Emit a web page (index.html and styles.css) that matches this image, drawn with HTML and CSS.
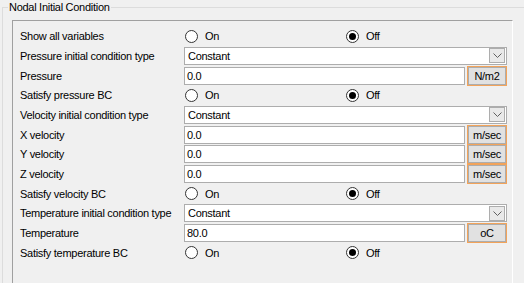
FILE: index.html
```html
<!DOCTYPE html>
<html lang="en">
<head>
    <meta charset="UTF-8">
    <meta name="viewport" content="width=device-width, initial-scale=1.0">
    <title>Nodal Initial Condition</title>
    <link rel="stylesheet" href="styles.css">
</head>
<body>
    <fieldset class="group">
        <legend>Nodal Initial Condition</legend>
        <div class="panel">
            <div class="row">
                <span class="label">Show all variables</span>
                <div class="radios">
                    <span class="radio"><span class="dot"></span>On</span>
                    <span class="radio checked"><span class="dot"></span>Off</span>
                </div>
            </div>
            <div class="row">
                <span class="label">Pressure initial condition type</span>
                <div class="combo">
                    <span class="combo-text">Constant</span>
                    <span class="combo-btn">
                        <svg width="9" height="5" viewBox="0 0 9 5"><path d="M0.5 0.5 L4.5 4.5 L8.5 0.5" fill="none" stroke="#606060" stroke-width="1"/></svg>
                    </span>
                </div>
            </div>
            <div class="row">
                <span class="label">Pressure</span>
                <div class="field">
                    <span class="input">0.0</span>
                    <span class="unit">N/m2</span>
                </div>
            </div>
            <div class="row">
                <span class="label">Satisfy pressure BC</span>
                <div class="radios">
                    <span class="radio"><span class="dot"></span>On</span>
                    <span class="radio checked"><span class="dot"></span>Off</span>
                </div>
            </div>
            <div class="row">
                <span class="label">Velocity initial condition type</span>
                <div class="combo">
                    <span class="combo-text">Constant</span>
                    <span class="combo-btn">
                        <svg width="9" height="5" viewBox="0 0 9 5"><path d="M0.5 0.5 L4.5 4.5 L8.5 0.5" fill="none" stroke="#606060" stroke-width="1"/></svg>
                    </span>
                </div>
            </div>
            <div class="row">
                <span class="label">X velocity</span>
                <div class="field">
                    <span class="input">0.0</span>
                    <span class="unit">m/sec</span>
                </div>
            </div>
            <div class="row">
                <span class="label">Y velocity</span>
                <div class="field">
                    <span class="input">0.0</span>
                    <span class="unit">m/sec</span>
                </div>
            </div>
            <div class="row">
                <span class="label">Z velocity</span>
                <div class="field">
                    <span class="input">0.0</span>
                    <span class="unit">m/sec</span>
                </div>
            </div>
            <div class="row">
                <span class="label">Satisfy velocity BC</span>
                <div class="radios">
                    <span class="radio"><span class="dot"></span>On</span>
                    <span class="radio checked"><span class="dot"></span>Off</span>
                </div>
            </div>
            <div class="row">
                <span class="label">Temperature initial condition type</span>
                <div class="combo">
                    <span class="combo-text">Constant</span>
                    <span class="combo-btn">
                        <svg width="9" height="5" viewBox="0 0 9 5"><path d="M0.5 0.5 L4.5 4.5 L8.5 0.5" fill="none" stroke="#606060" stroke-width="1"/></svg>
                    </span>
                </div>
            </div>
            <div class="row">
                <span class="label">Temperature</span>
                <div class="field">
                    <span class="input">80.0</span>
                    <span class="unit">oC</span>
                </div>
            </div>
            <div class="row">
                <span class="label">Satisfy temperature BC</span>
                <div class="radios">
                    <span class="radio"><span class="dot"></span>On</span>
                    <span class="radio checked"><span class="dot"></span>Off</span>
                </div>
            </div>
        </div>
    </fieldset>
</body>
</html>
```

FILE: styles.css
```css
* {
    box-sizing: border-box;
}

body {
    margin: 0;
    height: 283px;
    overflow: hidden;
    background-color: #f0f0f0;
    font-family: "Liberation Sans", Arial, sans-serif;
    font-size: 11px;
    letter-spacing: -0.28px;
    color: #000;
}

.group {
    margin: 0 0 0 2px;
    padding: 6px 0 0 9px;
    width: 522px;
    height: 283px;
    border: 1px solid #dcdcdc;
    border-right: none;
    border-bottom: none;
}

.group legend {
    margin-left: -4px;
    padding: 0 1px;
    line-height: 14px;
}

.panel {
    width: 501px;
    height: 263px;
    padding: 5.5px 5px 0 7px;
    border-top: 1px solid #a0a0a0;
    border-left: 1px solid #a0a0a0;
    border-right: 1px solid #fff;
    display: flex;
    flex-direction: column;
}

.row {
    height: 19.66px;
    display: grid;
    grid-template-columns: 164px 1fr;
    align-items: center;
}

.label {
    white-space: nowrap;
}

/* radio buttons */
.radios {
    display: flex;
    align-items: center;
    padding-left: 1px;
}

.radio {
    width: 161px;
    display: flex;
    align-items: center;
    gap: 7px;
}

.dot {
    width: 13px;
    height: 13px;
    border: 1px solid #333;
    border-radius: 50%;
    background-color: #fff;
    display: flex;
    align-items: center;
    justify-content: center;
}

.checked .dot::after {
    content: "";
    width: 7px;
    height: 7px;
    border-radius: 50%;
    background-color: #000;
}

/* combo box */
.combo {
    height: 18px;
    border: 1px solid #adadad;
    background-color: #fff;
    display: flex;
    align-items: center;
    padding: 0 1px 0 3px;
}

.combo-text {
    flex: 1;
}

.combo-btn {
    width: 16px;
    height: 15px;
    border: 1px solid #adadad;
    background-color: #e9e9e9;
    display: flex;
    align-items: center;
    justify-content: center;
}

/* text field with unit */
.field {
    display: flex;
    align-items: center;
    gap: 2px;
}

.input {
    flex: 1;
    height: 18px;
    padding-left: 2px;
    border: 1px solid #adadad;
    background-color: #fff;
    display: flex;
    align-items: center;
}

.unit {
    width: 40px;
    height: 20px;
    border: 1px solid #f2a35a;
    box-shadow: inset 0 0 0 1px #adadad;
    background-color: #e1e1e1;
    display: flex;
    align-items: center;
    justify-content: center;
}
```
